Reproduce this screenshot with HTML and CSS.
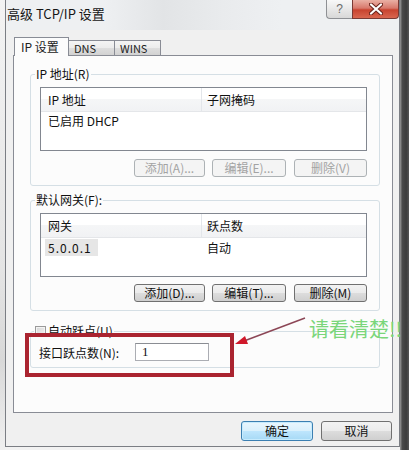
FILE: index.html
```html
<!DOCTYPE html>
<html lang="zh-CN">
<head>
<meta charset="utf-8">
<title>高级 TCP/IP 设置</title>
<link rel="stylesheet" href="styles.css">
</head>
<body>
<div class="desk">
  <div class="gap-left"></div>
  <div class="window">
    <div class="titlebar">
      <span class="title">高级 TCP/IP 设置</span>
      <div class="caption">
        <div class="cap-help">?</div>
        <div class="cap-close">
          <svg width="14" height="12" viewBox="0 0 14 12">
            <path d="M2 1.5 L12 10.5 M12 1.5 L2 10.5" stroke="#6a241c" stroke-width="4.2" stroke-linecap="round"/>
            <path d="M2 1.5 L12 10.5 M12 1.5 L2 10.5" stroke="#ffffff" stroke-width="2.2" stroke-linecap="round"/>
          </svg>
        </div>
      </div>
    </div>
    <div class="client">
      <div class="tabs">
        <div class="tab sel">IP 设置</div>
        <div class="tab dns">DNS</div>
        <div class="tab wins">WINS</div>
      </div>
      <div class="page">
        <fieldset class="group g1">
          <legend>IP 地址(R)</legend>
          <div class="list">
            <div class="lh"><span class="c1">IP 地址</span><span class="c2">子网掩码</span></div>
            <div class="row"><span class="c1">已启用 DHCP</span></div>
          </div>
          <div class="btns">
            <button class="btn b-add" disabled>添加(A)...</button>
            <button class="btn b-edit" disabled>编辑(E)...</button>
            <button class="btn b-del" disabled>删除(V)</button>
          </div>
        </fieldset>
        <fieldset class="group g2">
          <legend>默认网关(F):</legend>
          <div class="list">
            <div class="lh"><span class="c1">网关</span><span class="c2">跃点数</span></div>
            <div class="row"><span class="c1"><span class="hl">5.0.0.1</span></span><span class="c2">自动</span></div>
          </div>
          <div class="btns">
            <button class="btn b-add">添加(D)...</button>
            <button class="btn b-edit">编辑(T)...</button>
            <button class="btn b-del">删除(M)</button>
          </div>
        </fieldset>
        <fieldset class="group g3">
          <legend><span class="chk"></span>自动跃点(U)</legend>
          <div class="metric">
            <span class="mlabel">接口跃点数(N):</span>
            <span class="input">1</span>
          </div>
        </fieldset>
      </div>
      <div class="footer">
        <button class="btn fbtn default">确定</button>
        <button class="btn fbtn">取消</button>
      </div>
    </div>
  </div>
  <div class="strip"></div>
</div>
<div class="note-box"></div>
<svg class="note-arrow" width="80" height="40" viewBox="0 0 80 40">
  <path d="M75 6 L14 29" stroke="#8c4656" stroke-width="1.4" fill="none"/>
  <path d="M5 32 L15 24 L18 32 Z" fill="#d0182a"/>
</svg>
<div class="note-text">请看清楚!!</div>
</body>
</html>
```
FILE: styles.css
```css
* { box-sizing: border-box; }
html, body { margin: 0; padding: 0; }
body {
  width: 409px;
  height: 450px;
  overflow: hidden;
  position: relative;
  background: #f2f2f2;
  font-family: "Noto Sans CJK SC", "Liberation Sans", sans-serif;
  font-size: 12px;
  color: #111;
}
.desk { display: flex; height: 450px; }
.gap-left { width: 5px; background: linear-gradient(#f3f3f3, #e4e4e4 60%, #d8d8d8 80%, #f0f0f0); }
.strip { width: 9px; background: linear-gradient(90deg, #9a9a9a, #4a4a4a 25%, #3c3c3c 70%, #555); }
.window {
  width: 395px;
  height: 447px;
  border: 1px solid #7b7e84;
  border-top: none;
  background: #f0f0f0;
  display: flex;
  flex-direction: column;
}
.titlebar {
  height: 30px;
  display: flex;
  justify-content: space-between;
  align-items: flex-start;
  background: linear-gradient(90deg, #eef0f2 0, #eef0f2 25%, #e2e4e6 40%, #e9ebed 55%, #eef0f2 70%);
}
.title { font-size: 13px; line-height: 28px; padding-left: 1px; color: #151515; }
.caption { display: flex; }
.cap-help {
  width: 26px;
  height: 19px;
  border: 1px solid #8e9094;
  border-top: none;
  border-right: none;
  border-radius: 0 0 0 4px;
  background: linear-gradient(#f8f8f8, #e8e8e8 50%, #d8d8d8);
  color: #6a6a6a;
  display: flex;
  align-items: center;
  justify-content: center;
  font-family: "Liberation Sans", sans-serif;
  font-size: 12px;
  line-height: 14px;
  padding-bottom: 1px;
}
.cap-close {
  width: 47px;
  height: 19px;
  border: 1px solid #7a3a34;
  border-top: none;
  border-radius: 0 0 4px 0;
  background: linear-gradient(#eab0a4, #d8796c 45%, #c8432f 55%, #d9664f);
  display: flex;
  align-items: center;
  justify-content: center;
  padding-bottom: 1px;
}
.client { padding: 0 6px 0 7px; display: flex; flex-direction: column; }
.tabs { height: 25px; display: flex; align-items: flex-end; padding-left: 1px; }
.tab {
  height: 15px;
  border: 1px solid #898c95;
  border-bottom: none;
  background: linear-gradient(#f4f4f4, #ececec 50%, #dedede 50%, #d2d2d2);
  line-height: 14px;
  padding-left: 5px;
  font-size: 11px;
  color: #222;
}
.tab.sel {
  width: 55px;
  height: 19px;
  margin-bottom: -1px;
  background: #fcfcfc;
  position: relative;
  z-index: 1;
  padding-left: 6px;
  line-height: 18px;
  font-size: 12px;
}
.tab.dns { width: 47px; margin-left: -1px; }
.tab.wins { width: 47px; margin-left: -1px; }
.page {
  height: 358px;
  border: 1px solid #898c95;
  background: #fcfcfc;
  padding: 11px 12px 0 16px;
  display: flex;
  flex-direction: column;
}
.group {
  margin: 0;
  min-width: 0;
  border: 1px solid #d5dfe5;
  border-radius: 3px;
  padding: 6px 12px 8px 9px;
}
.group legend {
  padding: 0 1px;
  margin-left: -5px;
  line-height: 14px;
  height: 14px;
  display: flex;
  align-items: center;
}
.g2 { margin-top: 7px; padding-bottom: 8px; }
.g3 { margin-top: 13px; padding: 5px 12px 6px 8px; }
.list {
  height: 64px;
  border: 1px solid #828790;
  background: #fff;
}
.lh {
  height: 24px;
  display: flex;
  background: linear-gradient(#ffffff, #ffffff 50%, #f5f6f7 50%, #f1f2f4);
  border-bottom: 1px solid #e4e6e9;
  line-height: 23px;
}
.c1 { width: 161px; padding-left: 7px; }
.lh .c1 { border-right: 1px solid #e3e6ea; }
.c2 { padding-left: 5px; }
.row { display: flex; height: 16px; line-height: 16px; margin-top: 1px; }
.g2 .row { margin-top: 2px; height: 15px; line-height: 15px; }
.g2 .row .c1 { padding-left: 4px; }
.hl { background: #e6e6e6; padding: 0 6px 0 3px; letter-spacing: 1px; }
.btns { display: flex; justify-content: flex-end; margin-top: 8px; }
.g2 .btns { margin-top: 7px; }
.btn {
  height: 18px;
  padding: 0;
  font-family: inherit;
  font-size: 12px;
  line-height: 16px;
  color: #111;
  border: 1px solid #707070;
  border-radius: 3px;
  background: linear-gradient(#f2f2f2, #ebebeb 50%, #dddddd 50%, #cfcfcf);
}
.btn:disabled { color: #a3a3a3; border-color: #adb2b5; background: #f4f4f4; }
.b-add { width: 71px; }
.b-edit { width: 74px; margin-left: 7px; }
.b-del { width: 73px; margin-left: 8px; }
.chk {
  width: 11px;
  height: 11px;
  border: 1px solid #9a9a9a;
  background: linear-gradient(135deg, #d6d6d6, #f4f4f4);
  margin: 0 2px 0 0;
  box-shadow: inset 0 0 0 1px #f4f4f4;
}
.metric { display: flex; align-items: center; height: 18px; }
.mlabel { width: 96px; padding-left: 0; }
.input {
  width: 74px;
  height: 18px;
  border: 1px solid #abadb3;
  border-top-color: #8a8d93;
  background: #fff;
  padding-left: 6px;
  line-height: 16px;
  font-family: "Liberation Serif", serif;
  font-size: 13px;
}
.footer { display: flex; justify-content: flex-end; margin-top: 8px; padding-right: 1px; }
.fbtn { height: 20px; line-height: 18px; width: 71px; margin-left: 8px; }
.fbtn.default {
  width: 72px;
  border-color: #3c7fb1;
  background: linear-gradient(#eaf6fd, #d9f0fc 50%, #bee6fd 50%, #a7d9f5);
  box-shadow: inset 0 0 0 1px #c7ebfd;
}
.note-box {
  position: absolute;
  left: 25px;
  top: 333px;
  width: 209px;
  height: 44px;
  border: 4px solid #aa2430;
}
.note-arrow { position: absolute; left: 230px; top: 312px; }
.note-text {
  position: absolute;
  left: 309px;
  top: 316px;
  font-size: 20px;
  line-height: 26px;
  font-weight: 400;
  color: #7ad67a;
  white-space: nowrap;
}
```
